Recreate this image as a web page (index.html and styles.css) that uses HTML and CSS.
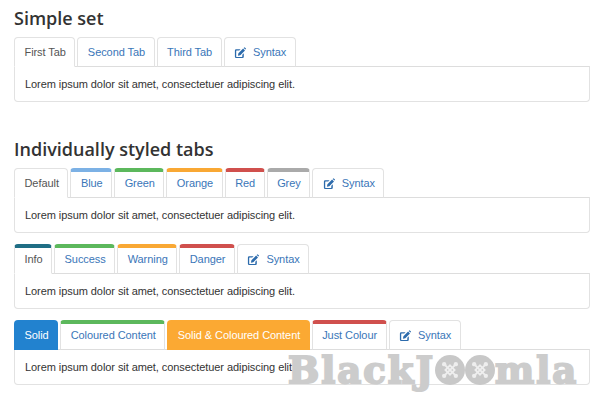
FILE: index.html
```html
<!DOCTYPE html>
<html lang="en">
<head>
<meta charset="utf-8">
<title>Tabs</title>
<link rel="stylesheet" href="styles.css">
</head>
<body>
<svg class="defs" width="0" height="0" aria-hidden="true">
  <symbol id="edit" viewBox="0 0 12 12">
    <path d="M6.6 2.2H2.2Q.9 2.2.9 3.5v6.3q0 1.3 1.3 1.3h6.3q1.3 0 1.3-1.3V6.2L8.3 7.7v1.9q0 .3-.3.3H2.5q-.3 0-.3-.3V3.9q0-.3.3-.3h2.7z" fill="currentColor"/>
    <path d="M4.4 6.3 9.1 1.6l1.9 1.9-4.7 4.7-2.4.5zM9.7 1 10.3.4q.3-.3.6 0l1 1q.3.3 0 .6l-.6.6z" fill="currentColor"/>
  </symbol>
  <symbol id="joomla" viewBox="0 0 24 24">
    <g fill="none" stroke="currentColor" stroke-width="2.2">
      <path d="M5.5 5.5 18.5 18.5M18.5 5.5 5.5 18.5"/>
      <path d="M12 6.5 17.5 12 12 17.5 6.5 12z"/>
    </g>
    <g fill="currentColor">
      <circle cx="5" cy="5" r="2.6"/><circle cx="19" cy="5" r="2.6"/><circle cx="19" cy="19" r="2.6"/><circle cx="5" cy="19" r="2.6"/>
    </g>
  </symbol>
</svg>

<h2 class="title">Simple set</h2>
<section class="tabset">
  <ul class="tabs">
    <li class="tab active">First Tab</li>
    <li class="tab">Second Tab</li>
    <li class="tab">Third Tab</li>
    <li class="tab"><svg class="icon"><use href="#edit"/></svg>Syntax</li>
  </ul>
  <div class="panel">Lorem ipsum dolor sit amet, consectetuer adipiscing elit.</div>
</section>

<h2 class="title title-second">Individually styled tabs</h2>
<section class="tabset">
  <ul class="tabs">
    <li class="tab active">Default</li>
    <li class="tab top-blue">Blue</li>
    <li class="tab top-green">Green</li>
    <li class="tab top-orange">Orange</li>
    <li class="tab top-red">Red</li>
    <li class="tab top-grey">Grey</li>
    <li class="tab"><svg class="icon"><use href="#edit"/></svg>Syntax</li>
  </ul>
  <div class="panel">Lorem ipsum dolor sit amet, consectetuer adipiscing elit.</div>
</section>

<section class="tabset spaced">
  <ul class="tabs">
    <li class="tab active top-teal">Info</li>
    <li class="tab top-green">Success</li>
    <li class="tab top-orange">Warning</li>
    <li class="tab top-red">Danger</li>
    <li class="tab"><svg class="icon"><use href="#edit"/></svg>Syntax</li>
  </ul>
  <div class="panel">Lorem ipsum dolor sit amet, consectetuer adipiscing elit.</div>
</section>

<section class="tabset spaced last">
  <ul class="tabs">
    <li class="tab solid-blue">Solid</li>
    <li class="tab top-green">Coloured Content</li>
    <li class="tab solid-orange">Solid &amp; Coloured Content</li>
    <li class="tab top-red">Just Colour</li>
    <li class="tab"><svg class="icon"><use href="#edit"/></svg>Syntax</li>
  </ul>
  <div class="panel">Lorem ipsum dolor sit amet, consectetuer adipiscing elit.</div>
  <div class="watermark">
    <span class="mark-text">BlackJ</span>
    <span class="disc"><svg class="disc-logo"><use href="#joomla"/></svg></span>
    <span class="disc"><svg class="disc-logo"><use href="#joomla"/></svg></span>
    <span class="mark-text">mla</span>
  </div>
</section>
</body>
</html>
```
FILE: styles.css
```css
* { box-sizing: border-box; }
html, body { margin: 0; padding: 0; background: #fff; }
body {
  width: 600px;
  height: 410px;
  overflow: hidden;
  padding: 0 10px 0 14px;
  font-family: "Liberation Sans", Arial, sans-serif;
  font-size: 11px;
  letter-spacing: -0.07px;
  color: #333;
}
.defs { position: absolute; }
.title {
  margin: 0;
  height: 37px;
  padding-top: 5px;
  font-family: "Open Sans", sans-serif;
  font-size: 18px;
  line-height: 26px;
  font-weight: 600;
  letter-spacing: 0;
  color: #333;
}
.title-second { margin-top: 29px; height: 37px; }
.tabset { position: relative; }
.spaced { margin-top: 11px; }
.tabs {
  display: flex;
  gap: 2px;
  list-style: none;
  margin: 0;
  padding: 0;
  height: 30px;
}
.tab {
  height: 30px;
  padding: 0 8.5px 0 9.5px;
  border: 1px solid #e2e2e2;
  border-bottom: 1px solid #ddd;
  border-radius: 4px 4px 0 0;
  line-height: 29px;
  color: #3a76b8;
  background: #fff;
  display: flex;
  align-items: center;
  white-space: nowrap;
}
.tab.active {
  color: #555;
  border-bottom-color: #fff;
  position: relative;
  z-index: 1;
}
.top-blue { border-top: 4px solid #7cb1e5; }
.top-green { border-top: 4px solid #5cb85c; }
.top-orange { border-top: 4px solid #f9a834; }
.top-red { border-top: 4px solid #d0504d; }
.top-grey { border-top: 4px solid #aaa; }
.top-teal { border-top: 4px solid #1f6e85; }
.tab[class*="top-"] { padding-bottom: 3px; }
.solid-blue, .solid-orange { color: #fff; border-color: transparent; }
.solid-blue { background: #2282cf; }
.solid-orange { background: #fba933; }
.icon {
  width: 12px;
  height: 12px;
  margin-right: 7px;
  margin-top: 1px;
  color: #2c6bac;
}
.panel {
  height: 36px;
  margin-top: -1px;
  padding: 0 10px;
  border: 1px solid #e2e2e2;
  border-top-color: #ddd;
  border-radius: 0 0 4px 4px;
  line-height: 35px;
  color: #333;
  background: #fff;
}
.watermark {
  position: absolute;
  left: 274px;
  top: 35px;
  display: flex;
  align-items: center;
  height: 30px;
  font-family: "DejaVu Serif", serif;
  font-weight: 700;
  font-size: 37px;
  line-height: 30px;
  color: #ccc;
  -webkit-text-stroke: 2px #ccc;
}
.mark-text { letter-spacing: 2px; }
.disc {
  width: 30px;
  height: 30px;
  border-radius: 50%;
  background: #c8c8c8;
  display: flex;
  align-items: center;
  justify-content: center;
  flex: none;
}
.disc-logo { width: 20px; height: 20px; color: #eee; }
```
